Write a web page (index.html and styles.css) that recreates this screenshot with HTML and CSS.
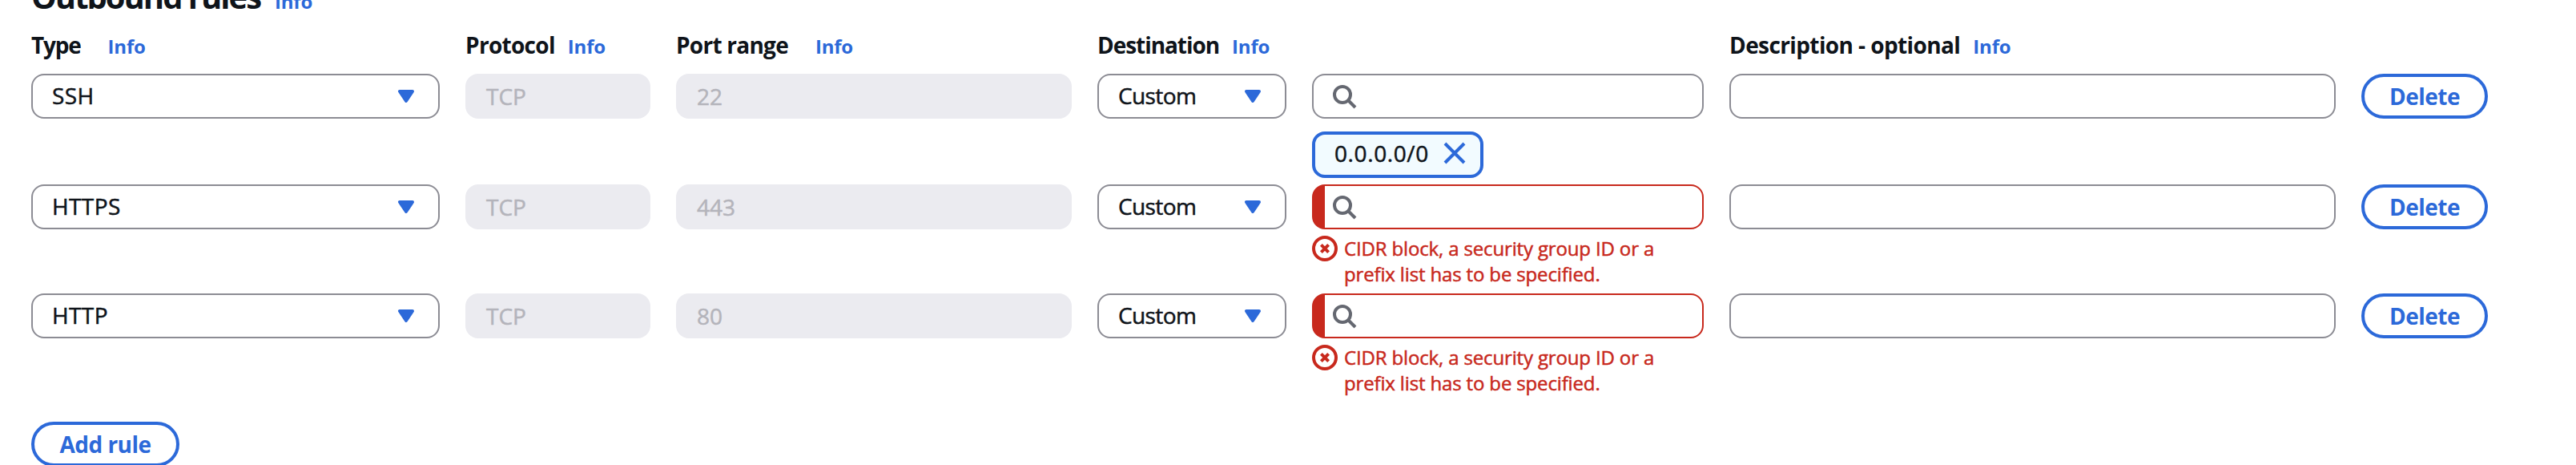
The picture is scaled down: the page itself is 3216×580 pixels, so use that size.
FILE: index.html
```
<!DOCTYPE html>
<html lang="en">
<head>
<meta charset="utf-8">
<title>Outbound rules</title>
<link rel="stylesheet" href="styles.css">
</head>
<body>
<svg width="0" height="0" class="sprite" aria-hidden="true">
  <symbol id="caret" viewBox="0 0 16 16"><path d="M4 5h8l-4 6-4-6z" fill="currentColor" stroke="currentColor" stroke-width="2" stroke-linejoin="round"/></symbol>
  <symbol id="search" viewBox="0 0 16 16"><g fill="none" stroke="currentColor" stroke-width="2"><circle cx="7" cy="7" r="5"/><path d="m15 15-4.5-4.5"/></g></symbol>
  <symbol id="close" viewBox="0 0 16 16"><path d="m2 2 12 12M14 2 2 14" fill="none" stroke="currentColor" stroke-width="2"/></symbol>
  <symbol id="error" viewBox="0 0 16 16"><g fill="none" stroke="currentColor" stroke-width="2"><circle cx="8" cy="8" r="7"/><path d="m10.3 5.7-4.6 4.6M5.7 5.7l4.6 4.6"/></g></symbol>
</svg>
<main class="rules">
  <h2 class="title"><span class="title-text">Outbound rules</span><a class="info">Info</a></h2>
  <div class="grid head">
    <div class="label"><span class="t-type">Type</span><a class="info">Info</a></div>
    <div class="label"><span class="t-protocol">Protocol</span><a class="info">Info</a></div>
    <div class="label"><span class="t-port">Port range</span><a class="info">Info</a></div>
    <div class="label label-wide"><span class="t-dest">Destination</span><a class="info">Info</a></div>
    <div class="label"><span class="t-desc">Description - optional</span><a class="info">Info</a></div>
  </div>
  <div class="grid row">
    <div class="field select type"><span class="caps">SSH</span><svg class="icon"><use href="#caret"/></svg></div>
    <div class="field disabled">TCP</div>
    <div class="field disabled">22</div>
    <div class="field select"><span class="custom">Custom</span><svg class="icon"><use href="#caret"/></svg></div>
    <div class="dest">
      <div class="field search"><svg class="icon"><use href="#search"/></svg></div>
      <div class="token"><span class="cidr">0.0.0.0/0</span><svg class="icon"><use href="#close"/></svg></div>
    </div>
    <div class="field"></div>
    <button class="button">Delete</button>
  </div>
  <div class="grid row">
    <div class="field select type"><span class="caps">HTTPS</span><svg class="icon"><use href="#caret"/></svg></div>
    <div class="field disabled">TCP</div>
    <div class="field disabled">443</div>
    <div class="field select"><span class="custom">Custom</span><svg class="icon"><use href="#caret"/></svg></div>
    <div class="dest">
      <div class="field search invalid"><svg class="icon"><use href="#search"/></svg></div>
      <div class="error"><svg class="icon"><use href="#error"/></svg><span>CIDR block, a security group ID or a<br>prefix list has to be specified.</span></div>
    </div>
    <div class="field"></div>
    <button class="button">Delete</button>
  </div>
  <div class="grid row">
    <div class="field select type"><span class="caps">HTTP</span><svg class="icon"><use href="#caret"/></svg></div>
    <div class="field disabled">TCP</div>
    <div class="field disabled">80</div>
    <div class="field select"><span class="custom">Custom</span><svg class="icon"><use href="#caret"/></svg></div>
    <div class="dest">
      <div class="field search invalid"><svg class="icon"><use href="#search"/></svg></div>
      <div class="error"><svg class="icon"><use href="#error"/></svg><span>CIDR block, a security group ID or a<br>prefix list has to be specified.</span></div>
    </div>
    <div class="field"></div>
    <button class="button">Delete</button>
  </div>
  <button class="button add">Add rule</button>
</main>
</body>
</html>
```
FILE: styles.css
```
:root {
  --blue: #2c69d9;
  --red: #c8291d;
  --ink: #0f141a;
  --line: #8c8c94;
}
* { box-sizing: border-box; }
body {
  margin: 0;
  height: 580px;
  overflow: hidden;
  background: #fff;
  color: var(--ink);
  font: 28px/40px "Open Sans", "Noto Sans", sans-serif;
}
.sprite { display: block; height: 0; }
.rules { padding: 0 39px; }
/* The panel is scrolled so the heading is partly above the viewport. */
.title {
  display: flex;
  align-items: baseline;
  gap: 18px;
  height: 48px;
  margin: -28px 0 16px;
  font-size: 40px;
  line-height: 48px;
}
.title-text { letter-spacing: -2px; }
.info {
  color: var(--blue);
  font-size: 24px;
  font-weight: 700;
  line-height: 32px;
  letter-spacing: -.2px;
}
.grid {
  display: grid;
  grid-template-columns: 510px 231px 494px 236px 489px 757px 158px;
  column-gap: 32px;
  align-items: start;
}
.head { margin-bottom: 16px; }
.label {
  display: flex;
  align-items: baseline;
  gap: 16px;
  height: 40px;
  font-weight: 700;
  white-space: nowrap;
}
.label-wide { grid-column: span 2; }
.t-type { letter-spacing: -1.2px; margin-right: 18px; }
.t-protocol { letter-spacing: -.7px; }
.t-port { letter-spacing: -.75px; margin-right: 18px; }
.t-dest { letter-spacing: -1.05px; }
.t-desc { letter-spacing: -.6px; }
.row { margin-bottom: 8px; }
.field,
.token,
.error { -webkit-text-stroke: .5px currentColor; }
.field {
  display: flex;
  align-items: center;
  height: 56px;
  padding: 0 24px;
  border: 2px solid var(--line);
  border-radius: 16px;
}
.select { justify-content: space-between; }
.select span { padding-bottom: 2px; }
.type { padding-left: 24px; }
.caps { letter-spacing: .4px; }
.custom { letter-spacing: -.6px; }
.disabled {
  border-color: #ebebf0;
  background: #ebebf0;
  color: #b4b4bb;
}
.icon {
  display: block;
  flex: none;
  width: 32px;
  height: 32px;
}
.select .icon { color: var(--blue); }
.search { padding-left: 22px; color: #656871; }
.invalid {
  padding-left: 8px;
  border-color: var(--red);
  border-left-width: 16px;
}
.token {
  display: inline-flex;
  align-items: center;
  justify-content: space-between;
  width: 214px;
  height: 58px;
  margin-top: 16px;
  padding: 0 16px 4px 24px;
  border: 4px solid var(--blue);
  border-radius: 16px;
  background: #f2fbff;
  vertical-align: top;
}
.token .icon { color: var(--blue); }
.cidr { letter-spacing: .6px; }
.error {
  display: flex;
  gap: 8px;
  margin-top: 8px;
  color: var(--red);
  font-size: 24px;
  line-height: 32px;
  letter-spacing: -.15px;
  white-space: nowrap;
}
.button {
  height: 56px;
  padding: 0 0 1px;
  border: 4px solid var(--blue);
  border-radius: 28px;
  background: #fff;
  color: var(--blue);
  font: 700 28px/40px "Open Sans", "Noto Sans", sans-serif;
  letter-spacing: -.5px;
}
.add { display: block; width: 185px; margin-top: 32px; }
```
